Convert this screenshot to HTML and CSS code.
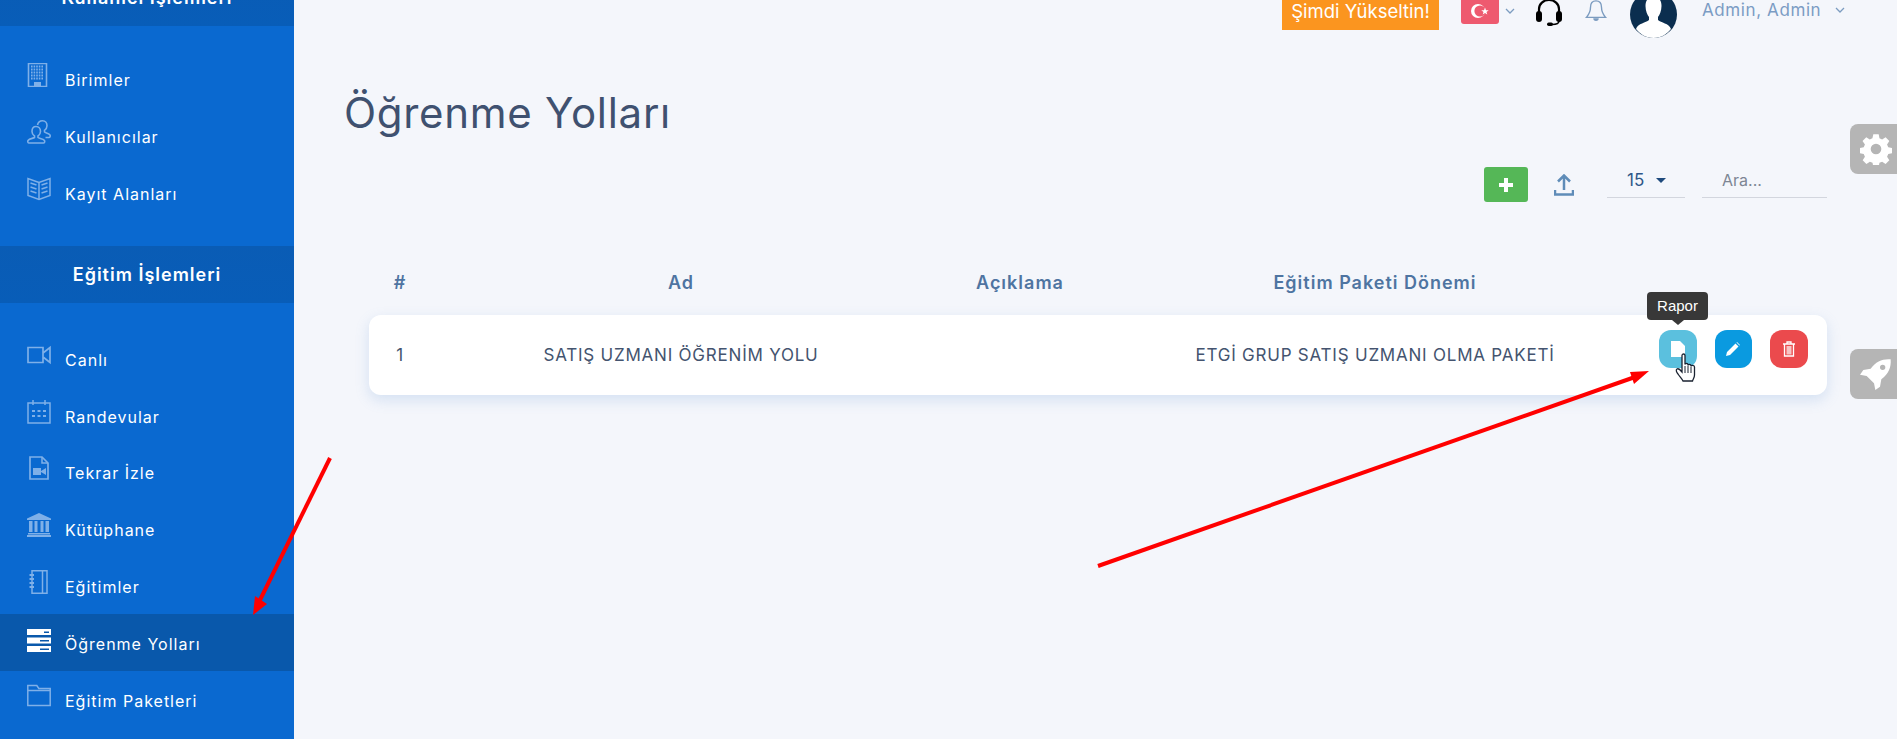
FILE: index.html
```html
<!DOCTYPE html>
<html lang="tr">
<head>
  <meta charset="UTF-8" />
  <title>Öğrenme Yolları</title>
  <link rel="stylesheet" href="styles.css">
</head>
<body>

  <aside class="sidebar">
    <div class="side-head first">Kullanıcı İşlemleri</div>
    <ul class="side-list">
      <li class="side-item">
        <svg class="side-icon" viewBox="0 0 24 24"><path d="M1.500 0.500h18v23h-18z" fill="none" stroke="currentColor" stroke-width="1.600"/><path d="M4 3.500h13M4 6.500h13M4 9.500h13M4 12.500h13M4 15.500h13" stroke="currentColor" stroke-width="1.800" stroke-dasharray="1.600 1"/><path d="M7 23v-4h7v4z" fill="currentColor"/></svg>
        <span>Birimler</span>
      </li>
      <li class="side-item">
        <svg class="side-icon" viewBox="0 0 24 24"><g fill="none" stroke="currentColor" stroke-width="1.600"><path d="M9 6.500c3 0 4.500 2.500 4.500 5 0 2-1 3.500-2.500 4.500v1.500c1 1 5 1 6.500 3 .5 1.200 0 2.500-1 2.500H2c-1 0-1.500-1.300-1-2.500 1.500-2 5-2 6.500-3V16C6 15 5 13.500 5 11.500c0-2.500 1-5 4-5z"/><path d="M10.500 5C11 2.500 13 .8 15.500 .8c3 0 4.500 2.500 4.500 5 0 2-1 3.500-2.500 4.500v1.700c1 1 4 1 5.500 3 .5 1 0 2.500-1 2.500h-3.500"/></g></svg>
        <span>Kullanıcılar</span>
      </li>
      <li class="side-item">
        <svg class="side-icon" viewBox="0 0 24 24"><g fill="none" stroke="currentColor" stroke-width="1.500"><path d="M12 5.500 1 1.500v17l11 4 11-4v-17z"/><path d="M12 5.500v17M3.500 6l6 2M3.500 10l6 2M3.500 14l6 2M20.500 6l-6 2M20.500 10l-6 2M20.500 14l-6 2"/></g></svg>
        <span>Kayıt Alanları</span>
      </li>
    </ul>

    <div class="side-head">Eğitim İşlemleri</div>
    <ul class="side-list second">
      <li class="side-item">
        <svg class="side-icon" viewBox="0 0 24 24"><path d="M1 4.500h15v15H1zM16 10l7-5.500v15L16 14" fill="none" stroke="currentColor" stroke-width="1.700"/></svg>
        <span>Canlı</span>
      </li>
      <li class="side-item">
        <svg class="side-icon" viewBox="0 0 24 24"><path d="M1 3h22v20H1zM6 0v5M18 0v5" fill="none" stroke="currentColor" stroke-width="1.500"/><path d="M5 10h3v2H5zM10.500 10h3v2h-3zM16 10h3v2h-3zM5 15h3v2H5zM10.500 15h3v2h-3zM16 15h3v2h-3z" fill="currentColor"/></svg>
        <span>Randevular</span>
      </li>
      <li class="side-item">
        <svg class="side-icon" viewBox="0 0 24 24"><path d="M3 1h12l6 6v16H3z" fill="none" stroke="currentColor" stroke-width="1.700"/><path d="M15 1v6h6" fill="none" stroke="currentColor" stroke-width="1.500"/><path d="M6 12h8v7H6zM14 15l5-3v7l-5-3z" fill="currentColor"/></svg>
        <span>Tekrar İzle</span>
      </li>
      <li class="side-item">
        <svg class="side-icon" viewBox="0 0 24 24"><path d="M12 0 24 5.500v1.500H0V5.500zM2 8h3.500v11H2zM7.500 8H10.500v11H7.500zM13.500 8h3v11h-3zM18.500 8H22v11h-3.500zM1 20h22v1.500H1zM0 22h24v2H0z" fill="currentColor"/></svg>
        <span>Kütüphane</span>
      </li>
      <li class="side-item">
        <svg class="side-icon" viewBox="0 0 24 24"><path d="M5 .8h15v22.400H5zM15.500 1v22" fill="none" stroke="currentColor" stroke-width="1.500"/><path d="M2.500 5H7M2.500 9H7M2.500 13H7M2.500 17H7" stroke="currentColor" stroke-width="2"/></svg>
        <span>Eğitimler</span>
      </li>
      <li class="side-item active">
        <svg class="side-icon" viewBox="0 0 24 24"><path d="M0 0h24v6H0zM0 8.500h24v6H0zM0 17h24v6H0z" fill="#fff"/><path d="M17 2.500h5v1.500h-5zM13 11h9v1.500h-9zM13 19.500h9V21h-9z" fill="#0958ab"/></svg>
        <span>Öğrenme Yolları</span>
      </li>
      <li class="side-item">
        <svg class="side-icon" viewBox="0 0 24 24"><path d="M.8 1.500h9l2 3h11.400v17H.8zM.8 6.500h22.400" fill="none" stroke="currentColor" stroke-width="1.500"/></svg>
        <span>Eğitim Paketleri</span>
      </li>
    </ul>
  </aside>

  <main class="main">
    <header class="topbar">
      <a class="upgrade">Şimdi Yükseltin!</a>
      <div class="flag">
        <svg viewBox="0 0 38 24" width="38" height="24"><circle cx="17" cy="11" r="7" fill="#fff"/><circle cx="19" cy="11" r="5.600" fill="#ee5a6f"/><path d="m24 7.500 1 2.700h2.700l-2.200 1.700.8 2.700-2.300-1.600-2.300 1.600.8-2.700-2.200-1.700H23z" fill="#fff"/></svg>
      </div>
      <svg class="chev flag-chev" viewBox="0 0 10 6"><path d="m1 1 4 4 4-4" fill="none" stroke="currentColor" stroke-width="1.300"/></svg>
      <svg class="headset" viewBox="0 0 28 26"><path d="M4 13V9a10 9 0 0 1 20 0v4" fill="none" stroke="#000" stroke-width="2.200"/><rect x="1" y="11" width="6" height="11" rx="3"/><rect x="21" y="11" width="6" height="11" rx="3"/><path d="M24 21c0 3-3 3.500-7 3.500" fill="none" stroke="#000" stroke-width="1.500"/><rect x="12" y="22.500" width="6" height="3.500" rx="1.700"/></svg>
      <svg class="bell" viewBox="0 0 24 24"><path d="M12 1c-4 0-6 3-6 7 0 6-2 8-4.500 11h21C20 16 18 14 18 8c0-4-2-7-6-7z" fill="none" stroke="#7c9cc0" stroke-width="1.500"/><path d="M9 20h6a3 3 0 0 1-6 0z" fill="#7c9cc0"/></svg>
      <svg class="avatar" viewBox="0 0 47 47"><circle cx="23.500" cy="23.500" r="23.500" fill="#0b2e4f"/><path d="M23.500 6c6 0 8 4 8 9 0 5-2 9-3.500 11v3c3 3 11 3 13 9-4 5-10 9-17.500 9S10 43 6 38c2-6 10-6 13-9v-3c-1.500-2-3.500-6-3.500-11 0-5 2-9 8-9z" fill="#fff"/></svg>
      <span class="user">Admin, Admin</span>
      <svg class="chev user-chev" viewBox="0 0 10 6"><path d="m1 1 4 4 4-4" fill="none" stroke="currentColor" stroke-width="1.300"/></svg>
    </header>

    <h1 class="title">Öğrenme Yolları</h1>

    <div class="toolbar">
      <button class="add">
        <svg viewBox="0 0 14 14" width="14" height="14"><path d="M5 0h4v5h5v4H9v5H5V9H0V5h5z" fill="#fff"/></svg>
      </button>
      <svg class="upload" viewBox="0 0 20 22"><path d="M10 16V2M4 7.500 10 1.500l6 6M1 16v4.500h18V16" fill="none" stroke="#5f8cb8" stroke-width="2.500"/></svg>
      <div class="page-size"><span>15</span><i class="caret"></i></div>
      <div class="search">Ara...</div>
    </div>

    <div class="table">
      <div class="table-head">
        <div>#</div>
        <div>Ad</div>
        <div>Açıklama</div>
        <div>Eğitim Paketi Dönemi</div>
        <div></div>
      </div>
      <div class="table-row">
        <div>1</div>
        <div>SATIŞ UZMANI ÖĞRENİM YOLU</div>
        <div></div>
        <div>ETGİ GRUP SATIŞ UZMANI OLMA PAKETİ</div>
        <div class="actions">
          <button class="act report">
            <span class="tooltip">Rapor</span>
            <svg viewBox="0 0 14 16" width="14" height="16"><path d="M0 0h9l5 5v11H0z" fill="#fff"/></svg>
            <svg class="hand" viewBox="0 0 24 30" width="24" height="30"><path d="M7 2.500c0-2 3-2 3 0v9c0-1.500 3-1.500 3 0v1c0-1.500 3-1.500 3 0v1c0-1.500 3.500-1.500 3.500 .5v8c0 3-1.500 4-2 6H8c-1-2-3-4-5-7-1.500-2-2.500-4-1-5 1.500-1 3 .5 5 3z" fill="#fff" stroke="#1a2230" stroke-width="1.300"/><path d="M10 13v7M13 13v7M16 14v6" stroke="#1a2230" stroke-width="1"/></svg>
          </button>
          <button class="act edit">
            <svg viewBox="0 0 14 14" width="14" height="14"><path d="M0 14l1-4L9.500 1.500l3 3L4 13zM10.500 .5 11 0l3 3-.5.500z" fill="#fff"/></svg>
          </button>
          <button class="act remove">
            <svg viewBox="0 0 14 16" width="14" height="16"><path d="M1 3h12M5 3V1h4v2M2.500 3v12h9V3" fill="none" stroke="#fff" stroke-width="1.300"/><path d="M4.500 5h5v8.500h-5z" fill="#f7c4c5"/></svg>
          </button>
        </div>
      </div>
    </div>
  </main>

  <div class="float-tab gear">
    <svg viewBox="0 0 24 24" width="32" height="32"><path fill="#fff" fill-rule="evenodd" d="M10 1h4l.6 3 2 .9 2.600-1.700 2.800 2.800-1.700 2.600.9 2 3 .6v4l-3 .6-.9 2 1.700 2.600-2.800 2.800-2.600-1.700-2 .9-.6 3h-4l-.6-3-2-.9-2.600 1.700-2.800-2.800 1.700-2.600-.9-2-3-.6v-4l3-.6.9-2L1.900 6 4.700 3.200l2.600 1.700 2-.9zM12 8a4 4 0 1 0 0 8 4 4 0 0 0 0-8z"/></svg>
  </div>
  <div class="float-tab rocket">
    <svg viewBox="0 0 24 24" width="32" height="32"><path fill="#fff" d="M23 1c-6-.5-11 1.500-15 7l-5.500 1L0 12.500l5 1 5.500 5.500 1 5 3.500-2.500 1-5.500c5.500-4 7.500-9 7-15zM17 5a2 2 0 1 1 0 4 2 2 0 0 1 0-4z"/></svg>
  </div>

  <!-- red arrows drawn on top of the screenshot -->
  <svg class="marks" viewBox="0 0 1897 739" width="1897" height="739">
    <path d="M330 458 260 600" stroke="#f00" stroke-width="4" fill="none"/>
    <path d="M253 615 255 596 267 604z" fill="#f00"/>
    <path d="M1098 566 1635 377" stroke="#f00" stroke-width="4" fill="none"/>
    <path d="M1649 371 1630 372 1634 384z" fill="#f00"/>
  </svg>

</body>
</html>
```

FILE: styles.css
```css
* {
  box-sizing: border-box;
}

html, body {
  margin: 0;
  height: 739px;
  overflow: hidden;
}

body {
  display: flex;
  position: relative;
  background: #f4f6fb;
  font-family: Inter, 'Noto Sans', sans-serif;
  color: #3f5170;
}

.sidebar {
  width: 294px;
  flex-shrink: 0;
  height: 739px;
  overflow: hidden;
  background: #0a69d0;
  color: #fff;
}

.side-head {
  height: 57px;
  line-height: 57px;
  text-align: center;
  font-size: 18px;
  font-weight: 600;
  letter-spacing: 1px;
  background: linear-gradient(#0a5cb5, #085db8);
}

.side-head.first {
  margin-top: -31px;
}

.side-list {
  list-style: none;
  margin: 0;
  padding: 25px 0;
}

.side-list.second {
  padding-top: 27px;
}

.side-item {
  height: 56.8px;
  display: flex;
  align-items: center;
  gap: 14px;
  padding-left: 27px;
  font-size: 16px;
  letter-spacing: 1px;
}

.side-item span {
  padding-top: 2px;
}

.side-item.active {
  background: #0958ab;
}

.side-icon {
  width: 24px;
  height: 24px;
  color: #7fb0e8;
  margin-top: -8px;
}

.active .side-icon {
  margin-top: -4px;
}

.main {
  flex: 1;
  display: flex;
  flex-direction: column;
  padding: 0 70px 0 75px;
}

.topbar {
  height: 38px;
  display: flex;
  align-items: flex-start;
  justify-content: flex-end;
  margin-right: -18px;
}

.upgrade {
  height: 30px;
  width: 157px;
  line-height: 22px;
  text-align: center;
  background: #fb951f;
  color: #fff;
  font-size: 18.5px;
  letter-spacing: 0;
  white-space: nowrap;
}

.flag {
  width: 38px;
  height: 24px;
  margin-left: 22px;
  background: #ee5a6f;
  border-radius: 0 0 3px 3px;
}

.chev {
  width: 10px;
  height: 6px;
  color: #7c9cc0;
}

.flag-chev {
  margin: 8px 0 0 6px;
}

.headset {
  width: 28px;
  height: 26px;
  margin-left: 20px;
}

.bell {
  width: 24px;
  height: 22px;
  margin-left: 21px;
}

.avatar {
  width: 47px;
  height: 47px;
  margin: -9px 0 0 22px;
}

.user {
  margin-left: 25px;
  font-size: 17px;
  line-height: 21px;
  color: #7b9cc4;
  width: 132px;
  letter-spacing: 0.6px;
  white-space: nowrap;
}

.user-chev {
  margin: 7px 0 0 1px;
}

.title {
  margin: 50px 0 0 -25px;
  height: 50px;
  line-height: 50px;
  font-size: 42px;
  font-weight: 400;
  letter-spacing: 0.7px;
  color: #3f5170;
}

.toolbar {
  display: flex;
  align-items: flex-start;
  justify-content: flex-end;
  height: 35px;
  margin-top: 29px;
}

.add {
  width: 44px;
  height: 35px;
  border: none;
  border-radius: 3px;
  background: #55b757;
  padding: 0;
  display: flex;
  align-items: center;
  justify-content: center;
}

.upload {
  width: 20px;
  height: 22px;
  margin: 7px 0 0 26px;
}

.page-size {
  width: 78px;
  height: 31px;
  margin-left: 33px;
  padding: 0 0 4px 20px;
  display: flex;
  align-items: center;
  gap: 12px;
  border-bottom: 1px solid #d3d6de;
  font-size: 17px;
  color: #2f5688;
}

.caret {
  border-left: 5px solid transparent;
  border-right: 5px solid transparent;
  border-top: 5px solid #1f4a7d;
}

.search {
  width: 125px;
  height: 31px;
  line-height: 26px;
  margin-left: 17px;
  padding-left: 20px;
  border-bottom: 1px solid #d3d6de;
  font-size: 16px;
  color: #7d8694;
}

.table {
  margin-top: 51px;
}

.table-head,
.table-row {
  display: grid;
  grid-template-columns: 62px 500px 178px 532px 186px;
  align-items: center;
  text-align: center;
}

.table-head {
  height: 59px;
  font-size: 18px;
  font-weight: 600;
  letter-spacing: 1px;
  color: #4e74a1;
}

.table-row {
  height: 80px;
  margin-top: 3px;
  background: #fff;
  border-radius: 12px;
  box-shadow: 0 5px 14px rgba(100, 150, 215, 0.22);
  font-size: 17px;
  letter-spacing: 0.78px;
  color: #44546f;
}

.actions {
  display: flex;
  align-self: start;
  gap: 18px;
  margin-top: 15px;
  padding-left: 18px;
}

.act {
  position: relative;
  width: 37.5px;
  height: 38px;
  border: none;
  border-radius: 12px;
  padding: 0;
  display: flex;
  align-items: center;
  justify-content: center;
}

.report {
  background: #5bc0de;
}

.edit {
  background: #0a9ae0;
}

.remove {
  background: #eb4a4d;
}

.tooltip {
  position: absolute;
  left: -12px;
  top: -38px;
  width: 61px;
  height: 28px;
  border-radius: 4px;
  background: #383838;
  color: #fff;
  font: 15px/28px 'Liberation Sans', sans-serif;
  text-align: center;
  letter-spacing: 0;
}

.tooltip::after {
  content: '';
  position: absolute;
  left: 25px;
  bottom: -5px;
  border-left: 6px solid transparent;
  border-right: 6px solid transparent;
  border-top: 5px solid #383838;
}

.hand {
  position: absolute;
  left: 16px;
  top: 23px;
}

.float-tab {
  position: absolute;
  right: 0;
  width: 47px;
  height: 50px;
  padding-left: 4px;
  background: #b5b5b5;
  border-radius: 8px 0 0 8px;
  display: flex;
  align-items: center;
  justify-content: center;
}

.gear {
  top: 124px;
}

.rocket {
  top: 349px;
}

.marks {
  position: absolute;
  left: 0;
  top: 0;
  pointer-events: none;
}
```
